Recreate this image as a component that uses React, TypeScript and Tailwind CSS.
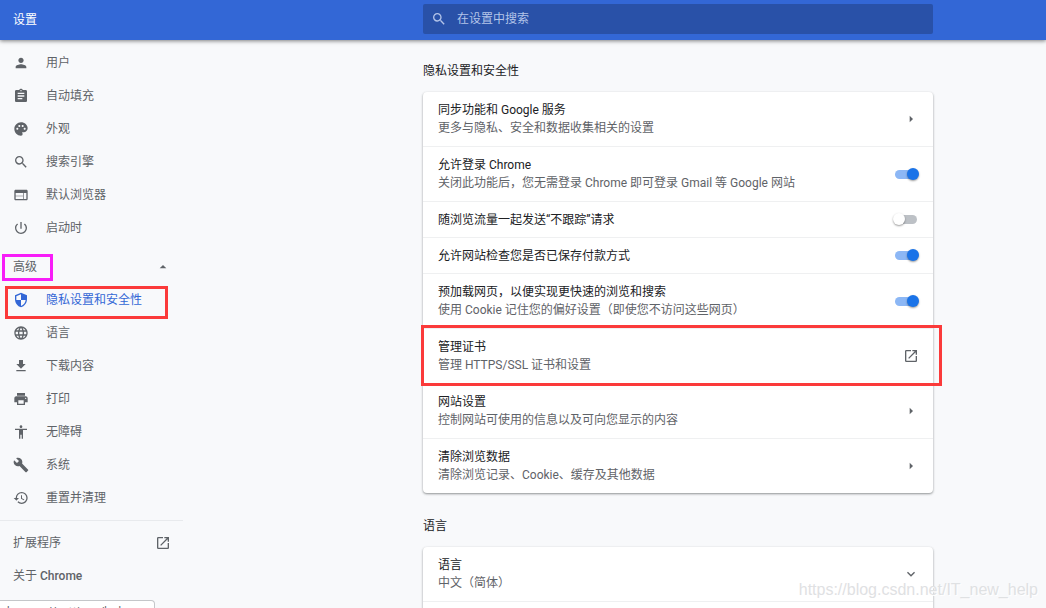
import { useState } from 'react'
import {
  MdAccessibility,
  MdArrowDropUp,
  MdArrowRight,
  MdAssignment,
  MdBuild,
  MdExpandMore,
  MdFileDownload,
  MdLanguage,
  MdOpenInNew,
  MdPalette,
  MdPerson,
  MdPowerSettingsNew,
  MdPrint,
  MdRestore,
  MdSearch,
  MdSecurity,
  MdWeb,
} from 'react-icons/md'
import type { IconType } from 'react-icons'

type NavEntry = { icon: IconType; label: string; active?: boolean }

type Row = {
  id: string
  title: string
  sub?: string
  kind: 'link' | 'toggle' | 'external' | 'expand'
  on?: boolean
  marked?: boolean
}

const basics: NavEntry[] = [
  { icon: MdPerson, label: '用户' },
  { icon: MdAssignment, label: '自动填充' },
  { icon: MdPalette, label: '外观' },
  { icon: MdSearch, label: '搜索引擎' },
  { icon: MdWeb, label: '默认浏览器' },
  { icon: MdPowerSettingsNew, label: '启动时' },
]

const advanced: NavEntry[] = [
  { icon: MdSecurity, label: '隐私设置和安全性', active: true },
  { icon: MdLanguage, label: '语言' },
  { icon: MdFileDownload, label: '下载内容' },
  { icon: MdPrint, label: '打印' },
  { icon: MdAccessibility, label: '无障碍' },
  { icon: MdBuild, label: '系统' },
  { icon: MdRestore, label: '重置并清理' },
]

const privacyRows: Row[] = [
  { id: 'sync', title: '同步功能和 Google 服务', sub: '更多与隐私、安全和数据收集相关的设置', kind: 'link' },
  { id: 'signin', title: '允许登录 Chrome', sub: '关闭此功能后，您无需登录 Chrome 即可登录 Gmail 等 Google 网站', kind: 'toggle', on: true },
  { id: 'dnt', title: '随浏览流量一起发送“不跟踪”请求', kind: 'toggle', on: false },
  { id: 'payment', title: '允许网站检查您是否已保存付款方式', kind: 'toggle', on: true },
  { id: 'preload', title: '预加载网页，以便实现更快速的浏览和搜索', sub: '使用 Cookie 记住您的偏好设置（即使您不访问这些网页）', kind: 'toggle', on: true },
  { id: 'certs', title: '管理证书', sub: '管理 HTTPS/SSL 证书和设置', kind: 'external', marked: true },
  { id: 'site', title: '网站设置', sub: '控制网站可使用的信息以及可向您显示的内容', kind: 'link' },
  { id: 'clear', title: '清除浏览数据', sub: '清除浏览记录、Cookie、缓存及其他数据', kind: 'link' },
]

const languageRows: Row[] = [{ id: 'lang', title: '语言', sub: '中文（简体）', kind: 'expand' }]

function NavItem({ icon: Icon, label, active }: NavEntry) {
  return (
    <li className="relative">
      <a
        href="#"
        className={`flex h-[33px] items-center gap-[17px] px-[13px] ${active ? 'text-[#3367d6]' : 'text-[#5f6368]'}`}
      >
        <Icon size={16} className="shrink-0" />
        {label}
      </a>
      {active && (
        <span className="pointer-events-none absolute -bottom-[3px] left-[5px] right-[15px] top-[3px] border-3 border-[#fb3a3a]" />
      )}
    </li>
  )
}

function SettingRow({ row }: { row: Row }) {
  const [on, setOn] = useState(!!row.on)
  const layout = `flex w-full items-center justify-between pl-[15px] pr-3.5 text-left ${row.sub ? 'h-[54px]' : 'h-[35px]'}`

  const text = (
    <span className="flex min-w-0 flex-col">
      <span className="text-[#202124]">{row.title}</span>
      {row.sub && <span className="text-[#5f6368]">{row.sub}</span>}
    </span>
  )

  return (
    <li className="relative border-b border-[#eff0f1] last:border-b-0">
      {row.kind === 'toggle' && (
        <label htmlFor={row.id} className={layout}>
          {text}
          <input
            id={row.id}
            type="checkbox"
            role="switch"
            checked={on}
            onChange={(e) => setOn(e.target.checked)}
            className="relative mr-0.5 h-[9px] w-[22px] shrink-0 appearance-none rounded-full bg-[#bdc1c6] before:absolute before:-left-0.5 before:-top-0.5 before:size-3 before:rounded-full before:bg-white before:shadow-[0_1px_2px_rgba(0,0,0,0.4)] checked:bg-[#8cb7f5] checked:before:left-3 checked:before:bg-[#1a73e8]"
          />
        </label>
      )}
      {row.kind === 'external' && (
        <a href="#" className={layout}>
          {text}
          <MdOpenInNew size={16} className="shrink-0 text-[#5f6368]" />
        </a>
      )}
      {(row.kind === 'link' || row.kind === 'expand') && (
        <button type="button" className={layout}>
          {text}
          {row.kind === 'link' ? (
            <MdArrowRight size={16} className="shrink-0 text-[#5f6368]" />
          ) : (
            <MdExpandMore size={16} className="shrink-0 text-[#5f6368]" />
          )}
        </button>
      )}
      {row.marked && (
        <span className="pointer-events-none absolute -bottom-[3px] -left-0.5 -right-[9px] -top-1 z-10 border-3 border-[#fb3a3a]" />
      )}
    </li>
  )
}

function Section({ title, rows, open }: { title: string; rows: Row[]; open?: boolean }) {
  return (
    <section>
      <h2 className="flex h-[52px] items-center pt-2.5 text-[#202124]">{title}</h2>
      <ul className="rounded bg-white shadow-[0_1px_2px_rgba(60,64,67,0.4),0_1px_3px_rgba(60,64,67,0.2)]">
        {rows.map((row) => (
          <SettingRow key={row.id} row={row} />
        ))}
        {open && <li className="h-9" />}
      </ul>
    </section>
  )
}

export default function App() {
  return (
    <div className="relative flex h-screen flex-col overflow-hidden bg-[#f8f9fb] font-[Roboto,'Noto_Sans_CJK_SC',sans-serif] text-xs leading-[18px]">
      {/* Toolbar */}
      <header className="z-10 grid h-10 shrink-0 grid-cols-[423px_minmax(0,1fr)_113px] items-center bg-[#3367d6] shadow-[0_1px_4px_rgba(0,0,0,0.5)]">
        <h1 className="px-[13px] text-white">设置</h1>
        <label className="mb-0.5 flex h-[30px] items-center gap-2.5 rounded-xs bg-[#2951a8] px-2">
          <MdSearch size={16} className="shrink-0 text-[#b3c4e9]" />
          <input
            type="text"
            aria-label="在设置中搜索"
            placeholder="在设置中搜索"
            className="w-full bg-transparent text-white outline-none placeholder:text-[#b3c4e9]"
          />
        </label>
      </header>

      <div className="grid min-h-0 flex-1 grid-cols-[423px_minmax(0,1fr)_113px]">
        {/* Side menu */}
        <nav className="w-[183px] pt-1.5 text-[#5f6368]">
          <ul>
            {basics.map((item) => (
              <NavItem key={item.label} {...item} />
            ))}
          </ul>
          <div className="relative">
            <button type="button" className="flex h-[39px] w-full items-center justify-between pl-[13px] pr-3 pt-1.5">
              高级
              <MdArrowDropUp size={16} />
            </button>
            <span className="pointer-events-none absolute bottom-0.5 left-0.5 top-2.5 w-[51px] border-3 border-[#f81df8]" />
          </div>
          <ul>
            {advanced.map((item) => (
              <NavItem key={item.label} {...item} />
            ))}
          </ul>
          <hr className="mb-[5px] mt-1.5 border-[#e8eaed]" />
          <a href="#" className="flex h-[33px] items-center justify-between pl-[13px] pr-3">
            扩展程序
            <MdOpenInNew size={16} />
          </a>
          <a href="#" className="flex h-[33px] items-center gap-[3px] px-[13px]">
            关于 <span className="font-medium">Chrome</span>
          </a>
        </nav>

        <main className="flex min-w-0 flex-col gap-0.5">
          <Section title="隐私设置和安全性" rows={privacyRows} />
          <Section title="语言" rows={languageRows} open />
        </main>
      </div>

      {/* Link status bubble */}
      <div className="absolute -bottom-4 left-0 h-6 w-[155px] rounded-tr border border-l-0 border-[#c4c6c9] bg-white px-px font-['Open_Sans',sans-serif] leading-[22px] text-[#5f6368]">
        chrome://settings/help
      </div>

      <p className="pointer-events-none absolute bottom-2 right-2 font-['Liberation_Sans',sans-serif] text-base leading-5 text-[#dfe1e3] [text-shadow:1px_1px_0_#ffffff]">
        https://blog.csdn.net/IT_new_help
      </p>
    </div>
  )
}
